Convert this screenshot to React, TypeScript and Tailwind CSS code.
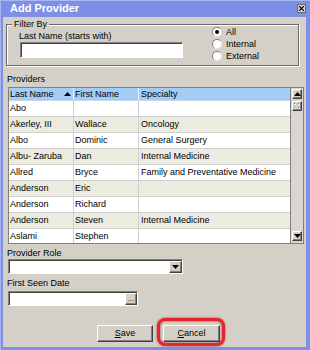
const raised =
  "bg-[#d4d0c8] border border-t-white border-l-white border-b-[#404040] border-r-[#404040] shadow-[inset_-1px_-1px_0_#808080]";
const sunken =
  "bg-white border border-t-[#808080] border-l-[#808080] border-b-white border-r-white shadow-[inset_1px_1px_0_#404040]";

const rows: [string, string, string][] = [
  ["Abo", "", ""],
  ["Akerley, III", "Wallace", "Oncology"],
  ["Albo", "Dominic", "General Surgery"],
  ["Albu- Zaruba", "Dan", "Internal Medicine"],
  ["Allred", "Bryce", "Family and Preventative Medicine"],
  ["Anderson", "Eric", ""],
  ["Anderson", "Richard", ""],
  ["Anderson", "Steven", "Internal Medicine"],
  ["Aslami", "Stephen", ""],
];

function Radio({ label, checked }: { label: string; checked?: boolean }) {
  return (
    <div className="h-[12px] flex items-center gap-[4px]">
      <div className="w-[10px] h-[10px] rounded-full bg-white border border-t-[#808080] border-l-[#808080] border-b-[#e4e2dc] border-r-[#e4e2dc] flex items-center justify-center">
        {checked && <div className="w-[4px] h-[4px] rounded-full bg-black" />}
      </div>
      <span>{label}</span>
    </div>
  );
}

function TriDown() {
  return (
    <svg width="7" height="4" viewBox="0 0 7 4">
      <path d="M0 0H7L3.5 4Z" fill="#000" />
    </svg>
  );
}
function TriUp() {
  return (
    <svg width="7" height="4" viewBox="0 0 7 4">
      <path d="M0 4H7L3.5 0Z" fill="#000" />
    </svg>
  );
}

export default function App() {
  return (
    <div className="w-[310px] h-[350px] bg-[#7d8fe6] flex flex-col font-['Liberation_Sans',Arial,sans-serif] text-[9px] leading-[11px] text-black shadow-[inset_1px_1px_0_#a9b6f0]">
      {/* title bar */}
      <div className="h-[17px] shrink-0 flex items-center pl-[10px] pr-[4px]">
        <span className="flex-1 text-white font-bold text-[11px] leading-[13px]">Add Provider</span>
        <div className="w-[9px] h-[9px] bg-[#d4d0c8] border border-[#6a6a6a] flex items-center justify-center">
          <svg width="5" height="5" viewBox="0 0 5 5">
            <path d="M0 0L5 5M5 0L0 5" stroke="#000" strokeWidth="1.2" />
          </svg>
        </div>
      </div>

      {/* body */}
      <div className="ml-[3px] mr-[4px] mb-[3px] flex-1 bg-[#d4d0c8] flex flex-col">
        {/* Filter By group */}
        <div className="relative ml-[3px] mt-[7px] w-[293px] h-[42px] border border-[#6b6b6b] shadow-[inset_1px_1px_0_#fff,1px_1px_0_#fff] flex">
          <span className="absolute -top-[6px] left-[5px] px-[2px] bg-[#d4d0c8]">Filter By</span>
          <div className="pl-[12px] pt-[6px] flex flex-col">
            <span>Last Name (starts with)</span>
            <div className={`ml-[1px] w-[163px] h-[16px] ${sunken}`} />
          </div>
          <div className="ml-[29px] pt-[1px] flex flex-col">
            <Radio label="All" checked />
            <Radio label="Internal" />
            <Radio label="External" />
          </div>
        </div>

        {/* Providers */}
        <span className="ml-[4px] mt-[8px]">Providers</span>
        <div className="ml-[5px] mt-[2px] w-[296px] h-[157px] border border-[#808080] flex bg-white">
          <div className="w-[281px] flex flex-col overflow-hidden">
            <div className="h-[13px] shrink-0 flex bg-[#a4cdf6] border-b border-[#c9d6e6]">
              <div className="w-[65px] flex items-center pl-[1px] pr-[2px] border-r border-[#e8f2fc]">
                <span className="flex-1">Last Name</span>
                <TriUp />
              </div>
              <div className="w-[65px] flex items-center pl-[1px] border-r border-[#e8f2fc]">First Name</div>
              <div className="w-[151px] flex items-center pl-[2px]">Specialty</div>
            </div>
            {rows.map((r, i) => (
              <div
                key={i}
                className={`h-[16px] shrink-0 flex border-b border-[#cfcfcf] ${i % 2 === 1 ? "bg-[#ecebdf]" : "bg-white"}`}
              >
                <div className="w-[65px] flex items-center pl-[1px] border-r border-[#cfcfcf] whitespace-nowrap overflow-hidden">{r[0]}</div>
                <div className="w-[65px] flex items-center pl-[1px] border-r border-[#cfcfcf] whitespace-nowrap overflow-hidden">{r[1]}</div>
                <div className="w-[151px] flex items-center pl-[2px] whitespace-nowrap overflow-hidden">{r[2]}</div>
              </div>
            ))}
          </div>
          {/* scrollbar */}
          <div className="w-[13px] bg-[#d9d6cf] border-l border-[#808080] flex flex-col items-center py-[1px]">
            <div className={`w-[10px] h-[10px] ${raised} flex items-center justify-center`}>
              <TriUp />
            </div>
            <div className={`mt-[2px] w-[10px] h-[10px] ${raised} flex items-center justify-center`}>
              <svg width="6" height="6" viewBox="0 0 6 6">
                <rect x="0" y="0" width="1" height="1" fill="#808080" />
                <rect x="4" y="0" width="1" height="1" fill="#808080" />
                <rect x="1" y="1" width="1" height="1" fill="#fff" />
                <rect x="5" y="1" width="1" height="1" fill="#fff" />
                <rect x="0" y="4" width="1" height="1" fill="#808080" />
                <rect x="4" y="4" width="1" height="1" fill="#808080" />
                <rect x="1" y="5" width="1" height="1" fill="#fff" />
                <rect x="5" y="5" width="1" height="1" fill="#fff" />
              </svg>
            </div>
            <div className="flex-1" />
            <div className={`mb-[1px] w-[10px] h-[10px] ${raised} flex items-center justify-center`}>
              <TriDown />
            </div>
          </div>
        </div>

        {/* Provider Role */}
        <span className="ml-[4px] mt-[4px]">Provider Role</span>
        <div className={`ml-[5px] w-[175px] h-[15px] ${sunken} flex justify-end items-center pr-[0px]`}>
          <div className={`w-[13px] h-[12px] ${raised} flex items-center justify-center`}>
            <TriDown />
          </div>
        </div>

        {/* First Seen Date */}
        <span className="ml-[4px] mt-[4px]">First Seen Date</span>
        <div className={`ml-[5px] mt-[2px] w-[130px] h-[15px] ${sunken} flex justify-end items-center`}>
          <div className={`w-[12px] h-[12px] ${raised} flex items-center justify-center text-[7px] leading-[7px]`}>
            ...
          </div>
        </div>

        {/* Buttons */}
        <div className="mt-[19px] flex">
          <div className={`ml-[94px] w-[56px] h-[17px] ${raised} flex items-center justify-center`}>
            <span><span className="underline">S</span>ave</span>
          </div>
          <div className="relative ml-[10px]">
            <div className={`w-[57px] h-[17px] ${raised} flex items-center justify-center`}>
              <span><span className="underline">C</span>ancel</span>
            </div>
            <div className="absolute -left-[6px] -right-[5px] -top-[7px] -bottom-[4px] rounded-[8px] border-[3px] border-[#e4262c] shadow-[0_0_2px_#9b1a1a,inset_0_0_2px_#8a1010]" />
          </div>
        </div>
      </div>
    </div>
  );
}
